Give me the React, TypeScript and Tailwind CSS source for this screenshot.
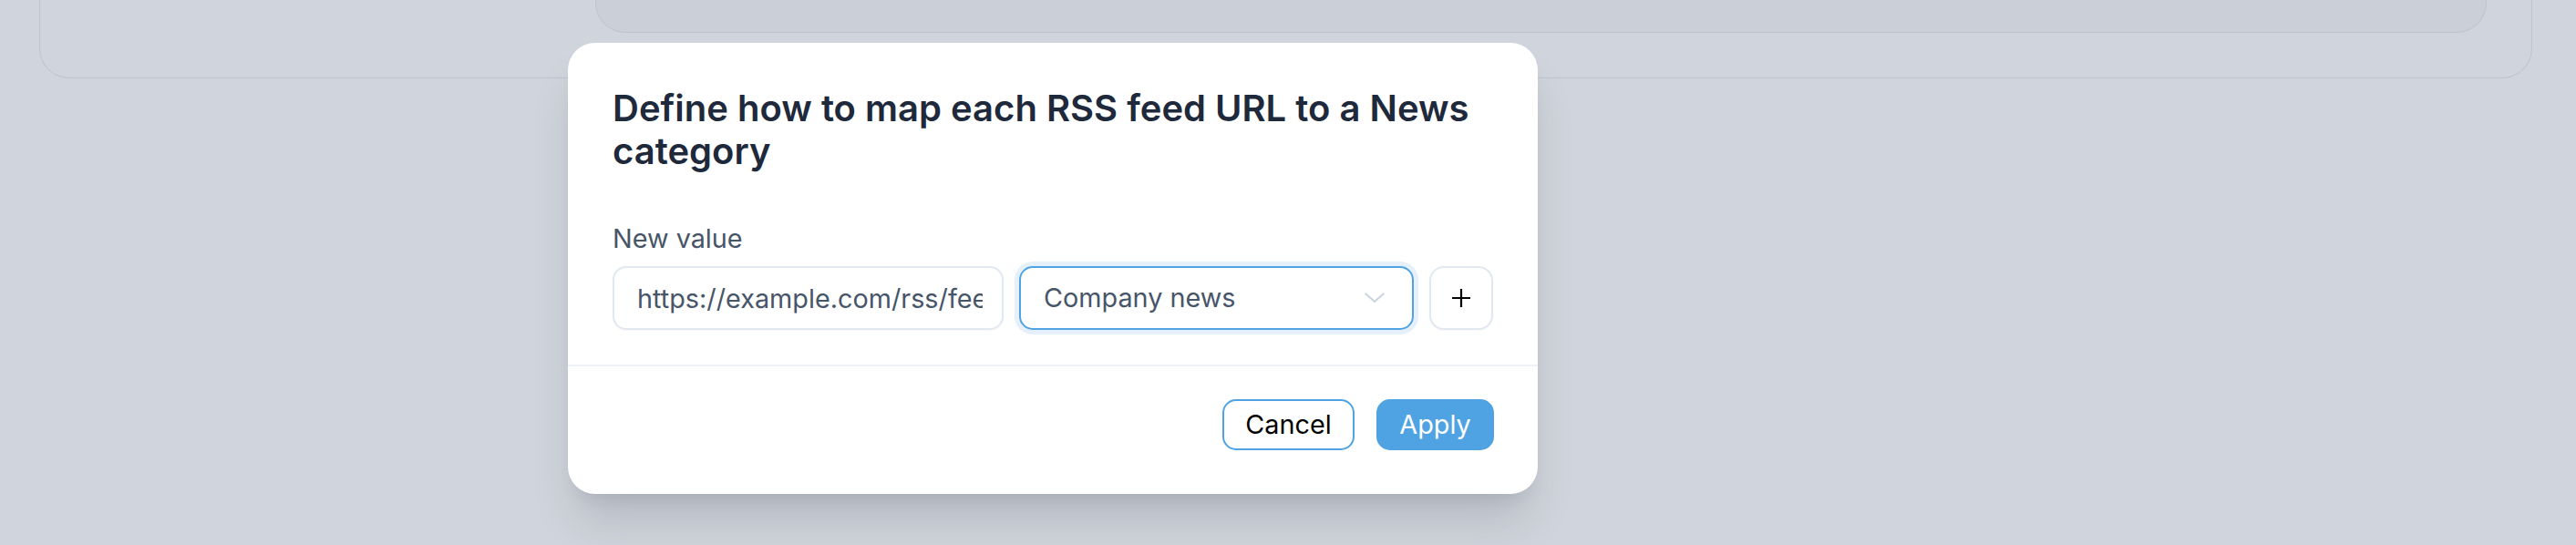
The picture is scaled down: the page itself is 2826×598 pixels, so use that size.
import React from "react";

function ChevronDown() {
  return (
    <svg width="22" height="12" viewBox="0 0 22 12" fill="none" aria-hidden="true">
      <path d="M1.5 1.5 L11 10 L20.5 1.5" stroke="#cbd5e1" strokeWidth="2.2" strokeLinecap="round" strokeLinejoin="round" />
    </svg>
  );
}

function PlusIcon() {
  return (
    <svg width="20" height="20" viewBox="0 0 20 20" fill="none" aria-hidden="true">
      <path d="M10 1 V19 M1 10 H19" stroke="#000" strokeWidth="2.2" strokeLinecap="square" />
    </svg>
  );
}

export default function App() {
  return (
    <div
      className="relative h-[598px] w-full overflow-hidden bg-[#d0d4dc]"
      style={{ fontFamily: "Inter, 'Noto Sans', sans-serif" }}
    >
      {/* Page content behind the dialog */}
      <div className="ml-[43px] mr-[48px] mt-[-120px] rounded-b-[33px] border-[1.5px] border-t-0 border-[#bcc4cf] pb-[49px] pl-[609px] pr-[49px]">
        <div className="h-[156px] rounded-b-[33px] border-[1.5px] border-t-0 border-[#bcc4cf] bg-[#cbd0d8]" />
      </div>

      {/* Dialog */}
      <div className="absolute left-[623px] top-[47px] w-[1064px] rounded-[30px] bg-white shadow-[0_36px_50px_-10px_rgba(30,41,59,0.16),0_14px_20px_-12px_rgba(30,41,59,0.12)]">
        <div className="px-[49px] pb-[38px] pt-[48px]">
          <h2 className="text-[40px] font-semibold leading-[47px] text-[#1e293b]">
            Define how to map each RSS feed URL to a News category
          </h2>

          <div className="mt-[51px] text-[28.8px] leading-[43px] text-[#475569]">New value</div>

          <div className="mt-[9px] flex items-center gap-[17px]">
            <input
              readOnly
              value="https://example.com/rss/feed"
              className="h-[70px] w-[429px] shrink-0 rounded-[15px] border-2 border-[#e2e8f0] bg-white pl-[25px] pr-[21px] text-[28.8px] text-[#475569] shadow-[0_1px_2px_rgba(0,0,0,0.04)] outline-none"
              style={{ fontFamily: "Inter, 'Noto Sans', sans-serif" }}
            />
            <div className="flex h-[70px] min-w-0 flex-1 items-center justify-between rounded-[15px] border-2 border-[#4fa3e2] bg-white pl-[25px] pr-[30px] shadow-[0_0_0_5px_#e6f0fa]">
              <span className="text-[28.8px] text-[#475569]">Company news</span>
              <ChevronDown />
            </div>
            <button className="flex h-[70px] w-[70px] shrink-0 items-center justify-center rounded-[16px] border-2 border-[#e2e8f0] bg-white shadow-[0_1px_2px_rgba(0,0,0,0.04)]">
              <PlusIcon />
            </button>
          </div>
        </div>

        <div className="h-[1.5px] bg-[#eef2f6]" />

        <div className="flex justify-end gap-[24px] px-[48px] pb-[48px] pt-[36px]">
          <button className="flex h-[56px] w-[145px] items-center justify-center rounded-[15px] border-2 border-[#4fa3e2] bg-white text-[28.8px] text-black">
            Cancel
          </button>
          <button className="flex h-[56px] w-[129px] items-center justify-center rounded-[15px] border-2 border-[#4fa3e2] bg-[#4fa3e2] text-[28.8px] text-white">
            Apply
          </button>
        </div>
      </div>
    </div>
  );
}
